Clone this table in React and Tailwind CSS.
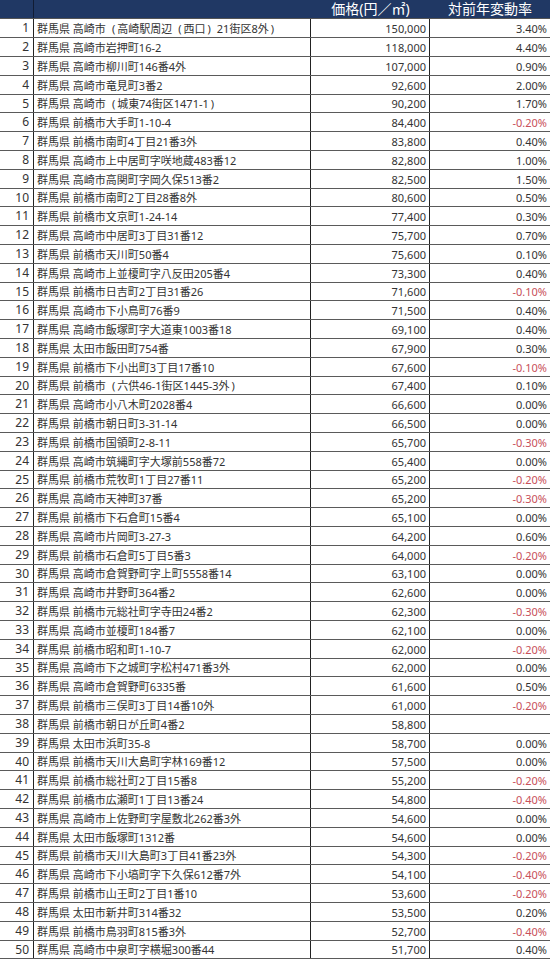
const rows = [
  ["群馬県 高崎市(高崎駅周辺(西口)21街区8外)", "150,000", "3.40%"],
  ["群馬県 高崎市岩押町16-2", "118,000", "4.40%"],
  ["群馬県 高崎市柳川町146番4外", "107,000", "0.90%"],
  ["群馬県 高崎市竜見町3番2", "92,600", "2.00%"],
  ["群馬県 高崎市(城東74街区1471-1)", "90,200", "1.70%"],
  ["群馬県 前橋市大手町1-10-4", "84,400", "-0.20%"],
  ["群馬県 前橋市南町4丁目21番3外", "83,800", "0.40%"],
  ["群馬県 高崎市上中居町字咲地蔵483番12", "82,800", "1.00%"],
  ["群馬県 高崎市高関町字岡久保513番2", "82,500", "1.50%"],
  ["群馬県 前橋市南町2丁目28番8外", "80,600", "0.50%"],
  ["群馬県 前橋市文京町1-24-14", "77,400", "0.30%"],
  ["群馬県 高崎市中居町3丁目31番12", "75,700", "0.70%"],
  ["群馬県 前橋市天川町50番4", "75,600", "0.10%"],
  ["群馬県 高崎市上並榎町字八反田205番4", "73,300", "0.40%"],
  ["群馬県 前橋市日吉町2丁目31番26", "71,600", "-0.10%"],
  ["群馬県 高崎市下小鳥町76番9", "71,500", "0.40%"],
  ["群馬県 高崎市飯塚町字大道東1003番18", "69,100", "0.40%"],
  ["群馬県 太田市飯田町754番", "67,900", "0.30%"],
  ["群馬県 前橋市下小出町3丁目17番10", "67,600", "-0.10%"],
  ["群馬県 前橋市(六供46-1街区1445-3外)", "67,400", "0.10%"],
  ["群馬県 高崎市小八木町2028番4", "66,600", "0.00%"],
  ["群馬県 前橋市朝日町3-31-14", "66,500", "0.00%"],
  ["群馬県 前橋市国領町2-8-11", "65,700", "-0.30%"],
  ["群馬県 高崎市筑縄町字大塚前558番72", "65,400", "0.00%"],
  ["群馬県 前橋市荒牧町1丁目27番11", "65,200", "-0.20%"],
  ["群馬県 高崎市天神町37番", "65,200", "-0.30%"],
  ["群馬県 前橋市下石倉町15番4", "65,100", "0.00%"],
  ["群馬県 高崎市片岡町3-27-3", "64,200", "0.60%"],
  ["群馬県 前橋市石倉町5丁目5番3", "64,000", "-0.20%"],
  ["群馬県 高崎市倉賀野町字上町5558番14", "63,100", "0.00%"],
  ["群馬県 高崎市井野町364番2", "62,600", "0.00%"],
  ["群馬県 前橋市元総社町字寺田24番2", "62,300", "-0.30%"],
  ["群馬県 高崎市並榎町184番7", "62,100", "0.00%"],
  ["群馬県 前橋市昭和町1-10-7", "62,000", "-0.20%"],
  ["群馬県 高崎市下之城町字松村471番3外", "62,000", "0.00%"],
  ["群馬県 高崎市倉賀野町6335番", "61,600", "0.50%"],
  ["群馬県 前橋市三俣町3丁目14番10外", "61,000", "-0.20%"],
  ["群馬県 前橋市朝日が丘町4番2", "58,800", ""],
  ["群馬県 太田市浜町35-8", "58,700", "0.00%"],
  ["群馬県 前橋市天川大島町字林169番12", "57,500", "0.00%"],
  ["群馬県 前橋市総社町2丁目15番8", "55,200", "-0.20%"],
  ["群馬県 前橋市広瀬町1丁目13番24", "54,800", "-0.40%"],
  ["群馬県 高崎市上佐野町字屋敷北262番3外", "54,600", "0.00%"],
  ["群馬県 太田市飯塚町1312番", "54,600", "0.00%"],
  ["群馬県 前橋市天川大島町3丁目41番23外", "54,300", "-0.20%"],
  ["群馬県 高崎市下小塙町字下久保612番7外", "54,100", "-0.40%"],
  ["群馬県 前橋市山王町2丁目1番10", "53,600", "-0.20%"],
  ["群馬県 太田市新井町314番32", "53,500", "0.20%"],
  ["群馬県 前橋市鳥羽町815番3外", "52,700", "-0.40%"],
  ["群馬県 高崎市中泉町字横堀300番44", "51,700", "0.40%"],
];

const font = { fontFamily: '"Noto Sans", "Noto Sans CJK JP", sans-serif' };

// the sheet uses full-width parentheses: glyph hugs the inner side of a 1em box
function Address({ text }) {
  const parts = text.split(/([()])/);
  return parts.map((p, i) => {
    if (p === "(") return <span key={i} className="pl-[6px] pr-[2px]">(</span>;
    if (p === ")") return <span key={i} className="pl-[2px] pr-[6px]">)</span>;
    return <span key={i}>{p}</span>;
  });
}

export default function App() {
  return (
    <div className="w-[550px] h-[959px] bg-white overflow-hidden" style={font}>
      {/* header */}
      <div className="flex h-[19px] bg-[#203864] text-white text-[14px] leading-none border-b border-[#555]">
        <div className="w-[34px] shrink-0 border-r border-[#111c33]" />
        <div className="w-[277px] shrink-0" />
        <div className="w-[119px] shrink-0 flex items-center justify-center">価格(円／㎡)</div>
        <div className="flex-1 flex items-center justify-center">対前年変動率</div>
      </div>

      {rows.map(([addr, price, rate], i) => (
        <div
          key={i}
          className={`flex ${i % 5 === 4 ? "h-[18px]" : "h-[19px]"} border-b border-[#5a5a5a] text-[11px] leading-none text-[#333]`}
        >
          <div className="w-[34px] shrink-0 border-r border-[#222] flex items-center justify-end pr-[4px] text-[12px]">{i + 1}</div>
          <div className="w-[277px] shrink-0 border-r border-[#222] flex items-center pl-[3px] whitespace-nowrap overflow-hidden">
            <Address text={addr} />
          </div>
          <div className="w-[119px] shrink-0 border-r border-[#222] flex items-center justify-end pr-[3px]">{price}</div>
          <div className={`flex-1 flex items-center justify-end pr-[3px] ${rate.startsWith("-") ? "text-[#c8505a]" : ""}`}>{rate}</div>
        </div>
      ))}
    </div>
  );
}
